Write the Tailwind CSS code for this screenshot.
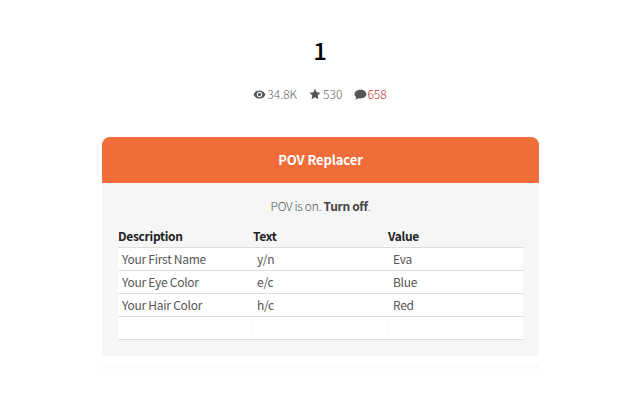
<!DOCTYPE html>
<html>
<head>
<meta charset="utf-8">
<script src="https://cdn.jsdelivr.net/npm/@tailwindcss/browser@4"></script>
</head>
<body class="bg-white">
<div class="w-[640px] h-[400px] overflow-hidden font-['Noto_Sans_CJK_SC','Noto_Sans',sans-serif] text-[#444]">
  <h1 class="pt-[35px] h-[80px] text-center text-[24px] leading-[30px] font-medium text-black">1</h1>
  <div class="flex justify-center items-center h-[28px] text-[12px] leading-[28px] text-[#666] font-light">
    <svg class="w-[13px] h-[13px] mr-px" viewBox="0 0 24 24" fill="#555"><path d="M12 4.500C7 4.500 2.700 7.600 1 12c1.700 4.400 6 7.500 11 7.500s9.300-3.100 11-7.500c-1.700-4.400-6-7.500-11-7.500zM12 17c-2.800 0-5-2.200-5-5s2.200-5 5-5 5 2.200 5 5-2.200 5-5 5zm0-8c-1.700 0-3 1.300-3 3s1.300 3 3 3 3-1.300 3-3-1.300-3-3-3z"/></svg>
    <span>34.8K</span>
    <svg class="w-[12px] h-[12px] ml-[12px] mr-[2px]" viewBox="0 0 24 24" fill="#555"><path d="M12 1.500l3.300 7.100 7.700 .9-5.700 5.300 1.500 7.700L12 18.700l-6.800 3.800 1.500-7.700L1 9.500l7.700-.9z"/></svg>
    <span>530</span>
    <svg class="w-[13px] h-[13px] ml-[12px]" viewBox="0 0 24 24" fill="#555"><path d="M12 3C5.900 3 1 6.700 1 11.300c0 2.200 1.200 4.200 3 5.700-.2 1.500-1 3-2 4 2.200-.1 4.300-1 5.800-2.200 1.300.4 2.700.6 4.200.6 6.100 0 11-3.600 11-8.100S18.100 3 12 3z"/></svg>
    <span class="text-[#c0392b]">658</span>
  </div>
  <div class="mt-[29px] mx-[102px] w-[437px]">
    <div class="h-[46px] rounded-t-[8px] bg-[#f06c38] flex items-center justify-center text-white text-[13px] tracking-[-0.1px] font-bold">POV Replacer</div>
    <div class="h-[173px] rounded-b-[4px] bg-[#f6f6f6] px-4">
      <p class="pt-[14px] h-[44px] text-center text-[12px] tracking-[-0.3px] leading-[18px] text-[#555] font-light">POV is on. <b class="font-bold text-[#444]">Turn off</b>.</p>
      <div class="grid grid-cols-[135px_135px_135px] h-[20px] text-[12px] tracking-[-0.3px] leading-[18px] font-bold text-[#222]">
        <span>Description</span><span>Text</span><span>Value</span>
      </div>
      <div class="bg-white border-t border-[#ddd] text-[12px] tracking-[-0.27px] text-[#555]">
        <div class="grid grid-cols-[135px_135px_135px] h-[23px] leading-[22px] border-b border-[#ddd]">
          <span class="pl-[4px]">Your First Name</span><span class="pl-[4px]">y/n</span><span class="pl-[5px]">Eva</span>
        </div>
        <div class="grid grid-cols-[135px_135px_135px] h-[23px] leading-[22px] border-b border-[#ddd]">
          <span class="pl-[4px]">Your Eye Color</span><span class="pl-[4px]">e/c</span><span class="pl-[5px]">Blue</span>
        </div>
        <div class="grid grid-cols-[135px_135px_135px] h-[23px] leading-[22px] border-b border-[#ddd]">
          <span class="pl-[4px]">Your Hair Color</span><span class="pl-[4px]">h/c</span><span class="pl-[5px]">Red</span>
        </div>
        <div class="grid grid-cols-[135px_135px_135px] h-[23px] border-b border-[#ddd]">
          <span class="border-r border-[#f6f6f6]"></span><span class="border-r border-[#f6f6f6]"></span><span></span>
        </div>
      </div>
    </div>
    <div class="mt-[8px] h-[5px] bg-[#fbfbfb]"></div>
  </div>
</div>
</body>
</html>
